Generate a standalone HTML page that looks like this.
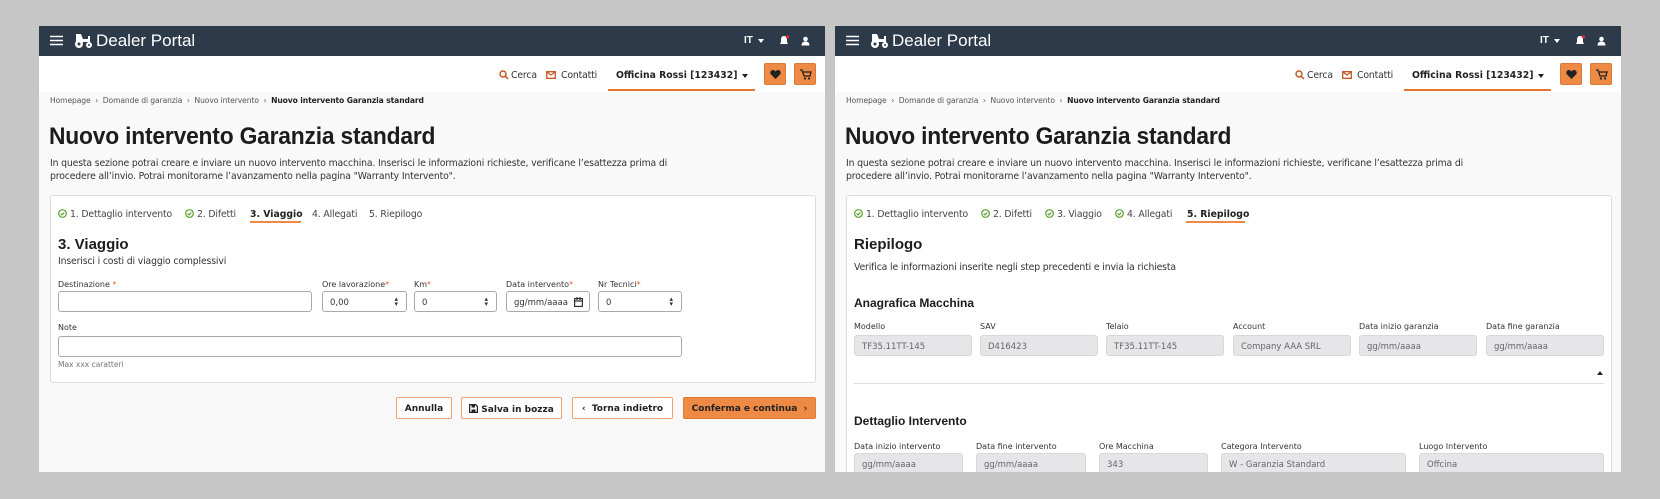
<!DOCTYPE html>
<html><head><meta charset="utf-8"><style>
*{box-sizing:border-box;margin:0;padding:0}
body{width:1660px;height:499px;background:#c6c6c6;position:relative;overflow:hidden;font-family:"DejaVu Sans",Verdana,sans-serif;color:#2a2a2a}
.p{position:absolute;top:26px;width:786px;height:446px;background:#f9f9f9;overflow:hidden}
.a{position:absolute;white-space:nowrap}
.hd{position:absolute;left:0;top:0;width:786px;height:30px;background:#2c3a4a}
.sn{position:absolute;left:0;top:30px;width:786px;height:36px;background:#fff}
.sans{font-family:"Liberation Sans",Arial,sans-serif}
.t9{font-size:9.3px;letter-spacing:-.15px}
.t8{font-size:7.6px;letter-spacing:-.1px}
.card{position:absolute;left:11px;width:766px;background:#fff;border:1px solid #dcdcdc;border-radius:3px}
.in{position:absolute;height:21px;border:1px solid #a9a9a9;border-radius:3px;background:#fff;font-size:8.5px;color:#333;padding:6px 7px}
.ro{position:absolute;height:21px;border:1px solid #d8d8d8;border-radius:3px;background:#e6e6e9;font-size:8.5px;color:#666;padding:6px 7px;white-space:nowrap;overflow:hidden}
.lab{position:absolute;font-size:8px;color:#333;white-space:nowrap}
.req{color:#e0632a}
.sp{position:absolute;right:8px;top:5px;font-size:7px;line-height:5px;color:#333}
.btn{position:absolute;top:371px;height:22px;border:1px solid #f0a070;border-radius:2px;background:#fff;font-weight:bold;font-size:9px;padding-top:6px;text-align:center;color:#222}
.ob{position:absolute;width:22px;height:22px;top:37px;background:#ef8a45;border:1px solid #d8793a;border-radius:2px}
.ck{display:inline-block;width:9px;height:9px;vertical-align:-1px;margin-right:3px}
.ttl{left:10px;top:97px;font-size:24px;font-weight:bold;color:#1c1c1c;letter-spacing:-.2px;transform:scaleX(.95);transform-origin:left}
</style></head><body>

<!-- LEFT PANEL -->
<div class="p" style="left:39px">
 <div class="hd">
  <svg class="a" style="left:11px;top:9px" width="13" height="11"><path d="M0 1.5H13M0 5.5H13M0 9.5H13" stroke="#fff" stroke-width="1.6"/></svg>
  <svg class="a" style="left:35px;top:6px" width="19" height="17" viewBox="0 0 19 17"><path d="M2 8V2h5l2 5h5V4h2v6H2z" fill="#fff"/><circle cx="5" cy="12" r="4" fill="#fff"/><circle cx="5" cy="12" r="1.5" fill="#2c3a4a"/><circle cx="15" cy="13" r="3" fill="#fff"/><circle cx="15" cy="13" r="1" fill="#2c3a4a"/></svg>
  <div class="a sans" style="left:57px;top:5px;font-size:17px;color:#fff">Dealer Portal</div>
  <div class="a sans" style="left:705px;top:9px;font-size:10px;font-weight:bold;color:#fff">IT</div>
  <div class="a" style="left:719px;top:13px;border:3px solid transparent;border-top:4px solid #fff"></div>
  <svg class="a" style="left:740px;top:9px" width="10" height="11"><path d="M5 1C2.5 1 2 3 2 5v2L1 9h8L8 7V5C8 3 7.5 1 5 1zM4 10h2" fill="#fff"/><circle cx="8.5" cy="1.8" r="1.6" fill="#e23"/></svg>
  <svg class="a" style="left:762px;top:10px" width="9" height="10"><circle cx="4.5" cy="3" r="2.3" fill="#fff"/><path d="M0.5 9.5c0-3 1.8-4 4-4s4 1 4 4z" fill="#fff"/></svg>
 </div>
 <div class="sn">
  <svg class="a" style="left:460px;top:14px" width="10" height="10"><circle cx="4" cy="4" r="3" stroke="#c4561e" stroke-width="1.4" fill="none"/><path d="M6 6l3 3" stroke="#c4561e" stroke-width="1.5"/></svg>
  <div class="a t9" style="left:472px;top:14px;color:#333">Cerca</div>
  <svg class="a" style="left:507px;top:15px" width="10" height="8"><rect x=".7" y=".7" width="8.6" height="6.6" stroke="#c4561e" stroke-width="1.3" fill="none"/><path d="M1 1l4 3 4-3" stroke="#c4561e" stroke-width="1.2" fill="none"/></svg>
  <div class="a t9" style="left:522px;top:14px;color:#333">Contatti</div>
  <div class="a" style="left:577px;top:14px;font-size:9.3px;font-weight:bold;color:#222">Officina Rossi [123432]</div>
  <div class="a" style="left:703px;top:18px;border:3px solid transparent;border-top:4px solid #222"></div>
  <div class="a" style="left:569px;top:33px;width:147px;height:2px;background:#e8742f"></div>
 </div>
 <div class="ob" style="left:725px"><svg style="position:absolute;left:5px;top:6px" width="11" height="9"><path d="M5.5 9L1 4.5C-0.5 3 0.5 0 3 0c1.2 0 2 .8 2.5 1.6C6 0.8 6.8 0 8 0c2.5 0 3.5 3 2 4.5z" fill="#222"/></svg></div>
 <div class="ob" style="left:755px"><svg style="position:absolute;left:5px;top:5px" width="12" height="11"><path d="M0 1h2l2 6h6l1-4H3" stroke="#222" stroke-width="1.3" fill="none"/><circle cx="5" cy="9.5" r="1.1" fill="#222"/><circle cx="9" cy="9.5" r="1.1" fill="#222"/></svg></div>

 <div class="a t8" style="left:11px;top:70px;color:#555">Homepage &nbsp;›&nbsp; Domande di garanzia &nbsp;›&nbsp; Nuovo intervento &nbsp;›&nbsp; <b style="color:#222">Nuovo intervento Garanzia standard</b></div>
 <div class="a sans ttl">Nuovo intervento Garanzia standard</div>
 <div class="a t9" style="left:11px;top:131px;color:#333;line-height:13px">In questa sezione potrai creare e inviare un nuovo intervento macchina. Inserisci le informazioni richieste, verificane l’esattezza prima di<br>procedere all’invio. Potrai monitorarne l’avanzamento nella pagina "Warranty Intervento".</div>

 <div class="card" style="top:169px;height:188px"></div>
 <div class="a t9" style="left:19px;top:183px;color:#444"><svg class="ck"><circle cx="4.5" cy="4.5" r="3.8" stroke="#5aa02c" stroke-width="1.2" fill="none"/><path d="M2.7 4.6l1.3 1.3 2.3-2.4" stroke="#5aa02c" stroke-width="1.2" fill="none"/></svg>1. Dettaglio intervento</div>
 <div class="a t9" style="left:146px;top:183px;color:#444"><svg class="ck"><circle cx="4.5" cy="4.5" r="3.8" stroke="#5aa02c" stroke-width="1.2" fill="none"/><path d="M2.7 4.6l1.3 1.3 2.3-2.4" stroke="#5aa02c" stroke-width="1.2" fill="none"/></svg>2. Difetti</div>
 <div class="a" style="left:211px;top:183px;font-size:9.3px;font-weight:bold;color:#222">3. Viaggio</div>
 <div class="a" style="left:211px;top:195px;width:51px;height:2px;background:#ef8a45"></div>
 <div class="a t9" style="left:273px;top:183px;color:#444">4. Allegati</div>
 <div class="a t9" style="left:330px;top:183px;color:#444">5. Riepilogo</div>
 <div class="a sans" style="left:19px;top:210px;font-size:15px;font-weight:bold;color:#1c1c1c">3. Viaggio</div>
 <div class="a t9" style="left:19px;top:230px;color:#333">Inserisci i costi di viaggio complessivi</div>

 <div class="lab" style="left:19px;top:254px">Destinazione <span class="req">*</span></div>
 <div class="lab" style="left:283px;top:254px">Ore lavorazione<span class="req">*</span></div>
 <div class="lab" style="left:375px;top:254px">Km<span class="req">*</span></div>
 <div class="lab" style="left:467px;top:254px">Data intervento<span class="req">*</span></div>
 <div class="lab" style="left:559px;top:254px">Nr Tecnici<span class="req">*</span></div>
 <div class="in" style="left:19px;top:265px;width:254px"></div>
 <div class="in" style="left:283px;top:265px;width:85px">0,00<div class="sp">▴<br>▾</div></div>
 <div class="in" style="left:375px;top:265px;width:83px">0<div class="sp">▴<br>▾</div></div>
 <div class="in" style="left:467px;top:265px;width:84px">gg/mm/aaaa<svg style="position:absolute;right:6px;top:5px" width="9" height="10"><rect x=".6" y="1.6" width="7.8" height="7.8" stroke="#333" stroke-width="1.2" fill="none"/><path d="M1 4h7M3 0v3M6 0v3" stroke="#333" stroke-width="1.2"/></svg></div>
 <div class="in" style="left:559px;top:265px;width:84px">0<div class="sp">▴<br>▾</div></div>
 <div class="lab" style="left:19px;top:297px">Note</div>
 <div class="in" style="left:19px;top:310px;width:624px"></div>
 <div class="lab" style="left:19px;top:334px;color:#777;font-size:7.5px">Max xxx caratteri</div>

 <div class="btn" style="left:357px;width:56px">Annulla</div>
 <div class="btn" style="left:422px;width:101px"><svg style="vertical-align:-1px" width="9" height="9"><path d="M.6.6h6l1.8 1.8v6H.6z" stroke="#222" stroke-width="1.2" fill="none"/><rect x="2.5" y="1" width="3.5" height="2.5" fill="#222"/><rect x="2.5" y="5.5" width="4" height="2.5" fill="#222"/></svg> Salva in bozza</div>
 <div class="btn" style="left:533px;width:101px">‹&nbsp;&nbsp;Torna indietro</div>
 <div class="btn" style="left:644px;width:133px;background:#ef8a45;border-color:#e07a35">Conferma e continua&nbsp; ›</div>
</div>

<!-- RIGHT PANEL -->
<div class="p" style="left:835px">
 <div class="hd">
  <svg class="a" style="left:11px;top:9px" width="13" height="11"><path d="M0 1.5H13M0 5.5H13M0 9.5H13" stroke="#fff" stroke-width="1.6"/></svg>
  <svg class="a" style="left:35px;top:6px" width="19" height="17" viewBox="0 0 19 17"><path d="M2 8V2h5l2 5h5V4h2v6H2z" fill="#fff"/><circle cx="5" cy="12" r="4" fill="#fff"/><circle cx="5" cy="12" r="1.5" fill="#2c3a4a"/><circle cx="15" cy="13" r="3" fill="#fff"/><circle cx="15" cy="13" r="1" fill="#2c3a4a"/></svg>
  <div class="a sans" style="left:57px;top:5px;font-size:17px;color:#fff">Dealer Portal</div>
  <div class="a sans" style="left:705px;top:9px;font-size:10px;font-weight:bold;color:#fff">IT</div>
  <div class="a" style="left:719px;top:13px;border:3px solid transparent;border-top:4px solid #fff"></div>
  <svg class="a" style="left:740px;top:9px" width="10" height="11"><path d="M5 1C2.5 1 2 3 2 5v2L1 9h8L8 7V5C8 3 7.5 1 5 1zM4 10h2" fill="#fff"/><circle cx="8.5" cy="1.8" r="1.6" fill="#e23"/></svg>
  <svg class="a" style="left:762px;top:10px" width="9" height="10"><circle cx="4.5" cy="3" r="2.3" fill="#fff"/><path d="M0.5 9.5c0-3 1.8-4 4-4s4 1 4 4z" fill="#fff"/></svg>
 </div>
 <div class="sn">
  <svg class="a" style="left:460px;top:14px" width="10" height="10"><circle cx="4" cy="4" r="3" stroke="#c4561e" stroke-width="1.4" fill="none"/><path d="M6 6l3 3" stroke="#c4561e" stroke-width="1.5"/></svg>
  <div class="a t9" style="left:472px;top:14px;color:#333">Cerca</div>
  <svg class="a" style="left:507px;top:15px" width="10" height="8"><rect x=".7" y=".7" width="8.6" height="6.6" stroke="#c4561e" stroke-width="1.3" fill="none"/><path d="M1 1l4 3 4-3" stroke="#c4561e" stroke-width="1.2" fill="none"/></svg>
  <div class="a t9" style="left:522px;top:14px;color:#333">Contatti</div>
  <div class="a" style="left:577px;top:14px;font-size:9.3px;font-weight:bold;color:#222">Officina Rossi [123432]</div>
  <div class="a" style="left:703px;top:18px;border:3px solid transparent;border-top:4px solid #222"></div>
  <div class="a" style="left:569px;top:33px;width:147px;height:2px;background:#e8742f"></div>
 </div>
 <div class="ob" style="left:725px"><svg style="position:absolute;left:5px;top:6px" width="11" height="9"><path d="M5.5 9L1 4.5C-0.5 3 0.5 0 3 0c1.2 0 2 .8 2.5 1.6C6 0.8 6.8 0 8 0c2.5 0 3.5 3 2 4.5z" fill="#222"/></svg></div>
 <div class="ob" style="left:755px"><svg style="position:absolute;left:5px;top:5px" width="12" height="11"><path d="M0 1h2l2 6h6l1-4H3" stroke="#222" stroke-width="1.3" fill="none"/><circle cx="5" cy="9.5" r="1.1" fill="#222"/><circle cx="9" cy="9.5" r="1.1" fill="#222"/></svg></div>

 <div class="a t8" style="left:11px;top:70px;color:#555">Homepage &nbsp;›&nbsp; Domande di garanzia &nbsp;›&nbsp; Nuovo intervento &nbsp;›&nbsp; <b style="color:#222">Nuovo intervento Garanzia standard</b></div>
 <div class="a sans ttl">Nuovo intervento Garanzia standard</div>
 <div class="a t9" style="left:11px;top:131px;color:#333;line-height:13px">In questa sezione potrai creare e inviare un nuovo intervento macchina. Inserisci le informazioni richieste, verificane l’esattezza prima di<br>procedere all’invio. Potrai monitorarne l’avanzamento nella pagina "Warranty Intervento".</div>

 <div class="card" style="top:169px;height:300px"></div>
 <div class="a t9" style="left:19px;top:183px;color:#444"><svg class="ck"><circle cx="4.5" cy="4.5" r="3.8" stroke="#5aa02c" stroke-width="1.2" fill="none"/><path d="M2.7 4.6l1.3 1.3 2.3-2.4" stroke="#5aa02c" stroke-width="1.2" fill="none"/></svg>1. Dettaglio intervento</div>
 <div class="a t9" style="left:146px;top:183px;color:#444"><svg class="ck"><circle cx="4.5" cy="4.5" r="3.8" stroke="#5aa02c" stroke-width="1.2" fill="none"/><path d="M2.7 4.6l1.3 1.3 2.3-2.4" stroke="#5aa02c" stroke-width="1.2" fill="none"/></svg>2. Difetti</div>
 <div class="a t9" style="left:210px;top:183px;color:#444"><svg class="ck"><circle cx="4.5" cy="4.5" r="3.8" stroke="#5aa02c" stroke-width="1.2" fill="none"/><path d="M2.7 4.6l1.3 1.3 2.3-2.4" stroke="#5aa02c" stroke-width="1.2" fill="none"/></svg>3. Viaggio</div>
 <div class="a t9" style="left:280px;top:183px;color:#444"><svg class="ck"><circle cx="4.5" cy="4.5" r="3.8" stroke="#5aa02c" stroke-width="1.2" fill="none"/><path d="M2.7 4.6l1.3 1.3 2.3-2.4" stroke="#5aa02c" stroke-width="1.2" fill="none"/></svg>4. Allegati</div>
 <div class="a" style="left:352px;top:183px;font-size:9.3px;font-weight:bold;color:#222">5. Riepilogo</div>
 <div class="a" style="left:351px;top:195px;width:59px;height:2px;background:#ef8a45"></div>
 <div class="a sans" style="left:19px;top:210px;font-size:15px;font-weight:bold;color:#1c1c1c">Riepilogo</div>
 <div class="a t9" style="left:19px;top:236px;color:#333">Verifica le informazioni inserite negli step precedenti e invia la richiesta</div>
 <div class="a sans" style="left:19px;top:270px;font-size:12px;font-weight:bold;color:#1c1c1c">Anagrafica Macchina</div>

 <div class="lab" style="left:19px;top:296px">Modello</div>
 <div class="lab" style="left:145px;top:296px">SAV</div>
 <div class="lab" style="left:271px;top:296px">Telaio</div>
 <div class="lab" style="left:398px;top:296px">Account</div>
 <div class="lab" style="left:524px;top:296px">Data inizio garanzia</div>
 <div class="lab" style="left:651px;top:296px">Data fine garanzia</div>
 <div class="ro" style="left:19px;top:309px;width:118px">TF35.11TT-145</div>
 <div class="ro" style="left:145px;top:309px;width:118px">D416423</div>
 <div class="ro" style="left:271px;top:309px;width:118px">TF35.11TT-145</div>
 <div class="ro" style="left:398px;top:309px;width:118px">Company AAA SRL</div>
 <div class="ro" style="left:524px;top:309px;width:118px">gg/mm/aaaa</div>
 <div class="ro" style="left:651px;top:309px;width:118px">gg/mm/aaaa</div>
 <div class="a" style="left:762px;top:345px;border:3px solid transparent;border-bottom:4px solid #222;border-top:0"></div>
 <div class="a" style="left:19px;top:357px;width:750px;height:1px;background:#ddd"></div>

 <div class="a sans" style="left:19px;top:388px;font-size:12px;font-weight:bold;color:#1c1c1c">Dettaglio Intervento</div>
 <div class="lab" style="left:19px;top:416px">Data inizio intervento</div>
 <div class="lab" style="left:141px;top:416px">Data fine intervento</div>
 <div class="lab" style="left:264px;top:416px">Ore Macchina</div>
 <div class="lab" style="left:386px;top:416px">Categora Intervento</div>
 <div class="lab" style="left:584px;top:416px">Luogo Intervento</div>
 <div class="ro" style="left:19px;top:427px;width:109px">gg/mm/aaaa</div>
 <div class="ro" style="left:141px;top:427px;width:110px">gg/mm/aaaa</div>
 <div class="ro" style="left:264px;top:427px;width:109px">343</div>
 <div class="ro" style="left:386px;top:427px;width:185px">W - Garanzia Standard</div>
 <div class="ro" style="left:584px;top:427px;width:185px">Offcina</div>
</div>
</body></html>
